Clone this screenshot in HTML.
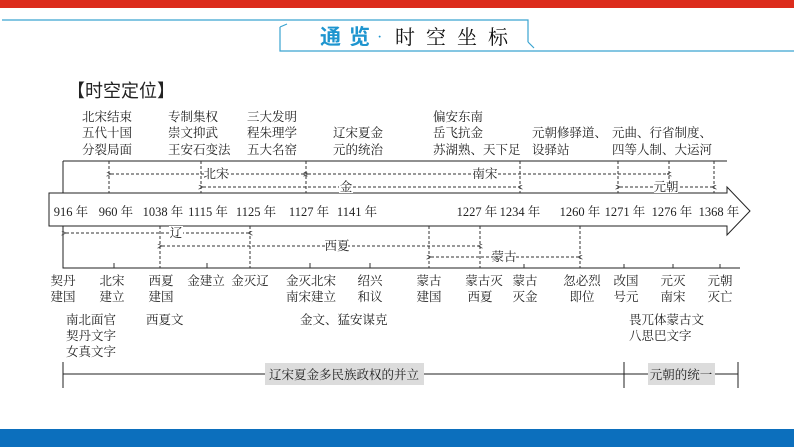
<!DOCTYPE html>
<html><head><meta charset="utf-8"><style>
body{margin:0;width:794px;height:447px;overflow:hidden;background:#fff}
svg{display:block}
text{font-family:"Liberation Serif","Noto Serif CJK SC",serif;font-size:12.5px;fill:#222}
</style></head><body>
<svg width="794" height="447" viewBox="0 0 794 447">
<defs>
<marker id="a" viewBox="0 0 6 6" refX="0" refY="3" markerWidth="5" markerHeight="5" orient="auto-start-reverse"><path d="M6,0 L0,3 L6,6" fill="none" stroke="#333" stroke-width="1"/></marker>
</defs>
<rect x="0" y="0" width="794" height="8" fill="#dc2c1c"/>
<rect x="0" y="429" width="794" height="18" fill="#0c6fbd"/>
<!-- header -->
<g stroke="#3aa3d0" stroke-width="1.2" fill="none">
<path d="M2,20 L528,20 L528,42 M280,27 L280,51 L794,51"/>
<path d="M280,27 L287,24 M528,42 L534,48"/>
</g>
<text x="320" y="44" style="font-family:'Liberation Sans','Noto Sans CJK SC',sans-serif;font-size:21px;font-weight:bold;fill:#1e95cf;letter-spacing:8px">通览</text>
<text x="377" y="42" style="font-size:16px;fill:#1e95cf">·</text>
<text x="395" y="44" style="font-family:'Noto Serif CJK SC',serif;font-size:20px;letter-spacing:11px;fill:#111">时空坐标</text>
<text x="67" y="97" style="font-family:'Noto Sans CJK SC',sans-serif;font-size:18px;fill:#222">【时空定位】</text>
<!-- top texts -->
<g>
<text x="82" y="121">北宋结束</text><text x="82" y="137">五代十国</text><text x="82" y="154">分裂局面</text>
<text x="168" y="121">专制集权</text><text x="168" y="137">崇文抑武</text><text x="168" y="154">王安石变法</text>
<text x="247" y="121">三大发明</text><text x="247" y="137">程朱理学</text><text x="247" y="154">五大名窑</text>
<text x="333" y="137">辽宋夏金</text><text x="333" y="154">元的统治</text>
<text x="433" y="121">偏安东南</text><text x="433" y="137">岳飞抗金</text><text x="433" y="154">苏湖熟、天下足</text>
<text x="532" y="137">元朝修驿道、</text><text x="532" y="154">设驿站</text>
<text x="612" y="137">元曲、行省制度、</text><text x="612" y="154">四等人制、大运河</text>
</g>
<!-- timeline frame -->
<g stroke="#222" stroke-width="1" fill="none">
<path d="M63,161 L727,161"/>
<path d="M63,161 L63,193 M63,226 L63,268 L740,268"/>
<path d="M49,193 L727,193 L727,187 L750,211 L727,235 L727,226 L49,226 Z" fill="#fff"/>
</g>
<g stroke="#333" stroke-width="1" stroke-dasharray="3,2">
<path d="M109,161 V193 M201,161 V193 M306,161 V193 M520,161 V193 M618,161 V193 M669,161 V193 M714,161 V193"/>
<path d="M250,226 V268 M160,226 V268 M429,226 V268 M480,226 V268 M580,226 V268"/>
</g>
<g stroke="#333" stroke-width="1">
<path d="M114,263 V268 M207,263 V268 M310,263 V268 M370,263 V268 M524,264 V268 M624,264 V268 M673,264 V268 M720,264 V268"/>
</g>
<!-- dashed ranges -->
<g stroke="#333" stroke-width="0.9" stroke-dasharray="3,2" marker-start="url(#a)" marker-end="url(#a)">
<path d="M111,174 H303"/><path d="M308,174 H667"/>
<path d="M203,187 H518"/><path d="M620,187 H712"/>
<path d="M66,233 H248"/><path d="M162,246 H478"/><path d="M431,257 H578"/>
</g>
<g text-anchor="middle">
<rect x="205" y="167" width="22" height="13" fill="#fff"/><text x="216" y="178">北宋</text>
<rect x="474" y="167" width="22" height="13" fill="#fff"/><text x="485" y="178">南宋</text>
<rect x="339" y="180" width="14" height="13" fill="#fff"/><text x="346" y="191">金</text>
<rect x="654" y="180" width="24" height="13" fill="#fff"/><text x="666" y="191">元朝</text>
<rect x="169" y="226" width="14" height="13" fill="#fff"/><text x="176" y="237">辽</text>
<rect x="326" y="239" width="22" height="13" fill="#fff"/><text x="337" y="250">西夏</text>
<rect x="493" y="250" width="22" height="13" fill="#fff"/><text x="504" y="261">蒙古</text>
<!-- years -->
<text x="71" y="216">916 年</text><text x="116" y="216">960 年</text><text x="163" y="216">1038 年</text>
<text x="208" y="216">1115 年</text><text x="256" y="216">1125 年</text><text x="309" y="216">1127 年</text>
<text x="357" y="216">1141 年</text><text x="477" y="216">1227 年</text><text x="520" y="216">1234 年</text>
<text x="580" y="216">1260 年</text><text x="625" y="216">1271 年</text><text x="672" y="216">1276 年</text>
<text x="719" y="216">1368 年</text>
<!-- labels -->
<text x="63" y="285">契丹</text><text x="63" y="301">建国</text>
<text x="112" y="285">北宋</text><text x="112" y="301">建立</text>
<text x="161" y="285">西夏</text><text x="161" y="301">建国</text>
<text x="206" y="285">金建立</text><text x="250" y="285">金灭辽</text>
<text x="311" y="285">金灭北宋</text><text x="311" y="301">南宋建立</text>
<text x="370" y="285">绍兴</text><text x="370" y="301">和议</text>
<text x="429" y="285">蒙古</text><text x="429" y="301">建国</text>
<text x="484" y="285">蒙古灭</text><text x="480" y="301">西夏</text>
<text x="525" y="285">蒙古</text><text x="525" y="301">灭金</text>
<text x="582" y="285">忽必烈</text><text x="582" y="301">即位</text>
<text x="626" y="285">改国</text><text x="626" y="301">号元</text>
<text x="673" y="285">元灭</text><text x="673" y="301">南宋</text>
<text x="720" y="285">元朝</text><text x="720" y="301">灭亡</text>
</g>
<text x="66" y="324">南北面官</text><text x="66" y="340">契丹文字</text><text x="66" y="356">女真文字</text>
<text x="146" y="324">西夏文</text>
<text x="300" y="324">金文、猛安谋克</text>
<text x="629" y="324">畏兀体蒙古文</text><text x="629" y="340">八思巴文字</text>
<!-- bracket -->
<g stroke="#222" stroke-width="1">
<path d="M63,362 V388 M624,362 V388 M738,362 V388 M63,374 H738"/>
</g>
<rect x="265" y="363" width="159" height="22" fill="#dcdcdc"/>
<text x="344" y="379" text-anchor="middle">辽宋夏金多民族政权的并立</text>
<rect x="648" y="363" width="67" height="22" fill="#dcdcdc"/>
<text x="681" y="379" text-anchor="middle">元朝的统一</text>
</svg>
</body></html>
